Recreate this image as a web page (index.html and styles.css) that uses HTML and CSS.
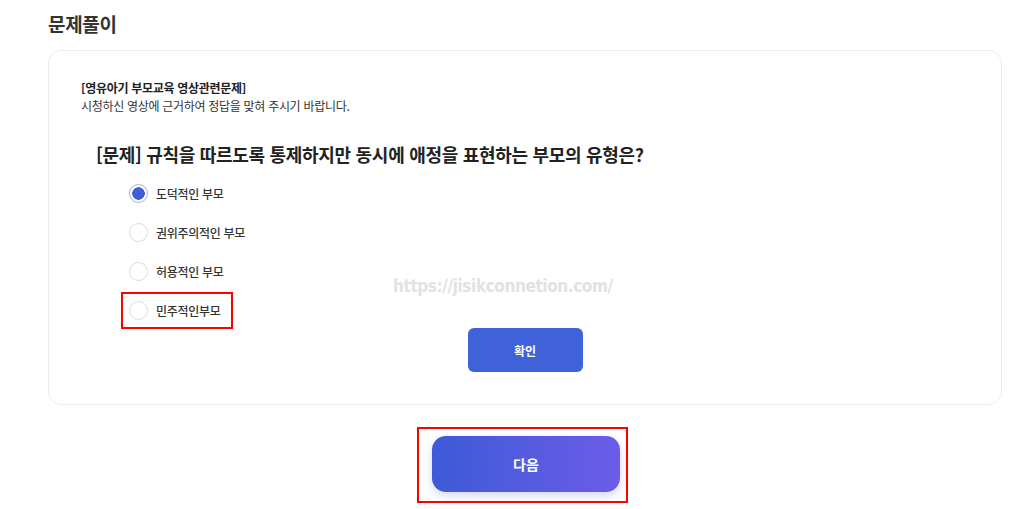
FILE: index.html
```html
<!DOCTYPE html>
<html lang="ko">
  <head>
    <meta charset="UTF-8" />
    <meta name="viewport" content="width=device-width, initial-scale=1.0" />
    <title>문제풀이</title>
    <link rel="stylesheet" href="styles.css">
  </head>
  <body>
    <div class="page">
      <h2 class="page-title">문제풀이</h2>

      <div class="quiz-card">
        <p class="quiz-label">[영유아기 부모교육 영상관련문제]</p>
        <p class="quiz-desc">시청하신 영상에 근거하여 정답을 맞혀 주시기 바랍니다.</p>

        <h3 class="quiz-question">[문제] 규칙을 따르도록 통제하지만 동시에 애정을 표현하는 부모의 유형은?</h3>

        <ul class="option-list">
          <li>
            <label class="option">
              <input type="radio" name="answer" checked />
              <span class="radio"></span>
              <span class="option-text">도덕적인 부모</span>
            </label>
          </li>
          <li>
            <label class="option">
              <input type="radio" name="answer" />
              <span class="radio"></span>
              <span class="option-text">권위주의적인 부모</span>
            </label>
          </li>
          <li>
            <label class="option">
              <input type="radio" name="answer" />
              <span class="radio"></span>
              <span class="option-text">허용적인 부모</span>
            </label>
          </li>
          <li>
            <label class="option option-marked">
              <input type="radio" name="answer" />
              <span class="radio"></span>
              <span class="option-text">민주적인부모</span>
            </label>
          </li>
        </ul>

        <div class="confirm-row">
          <button type="button" class="btn-confirm">확인</button>
        </div>

        <span class="watermark">https://jisikconnetion.com/</span>
      </div>

      <div class="next-row">
        <div class="next-mark">
          <button type="button" class="btn-next">다음</button>
        </div>
      </div>
    </div>
  </body>
</html>
```

FILE: styles.css
```css
body {
  margin: 0;
  background: #ffffff;
  font-family: "Noto Sans CJK KR", "Noto Sans", sans-serif;
  color: #222;
}
.page {
  padding: 11px 22px 0 48px;
}
.page-title {
  margin: 0;
  font-size: 19px;
  line-height: 26px;
  font-weight: 700;
  color: #333;
  letter-spacing: -0.3px;
}
.quiz-card {
  position: relative;
  margin-top: 13px;
  border: 1px solid #ececec;
  border-radius: 13px;
  padding: 28px 32px 32px 32px;
}
.quiz-label {
  margin: 0;
  font-size: 12px;
  line-height: 18px;
  font-weight: 700;
  color: #222;
  letter-spacing: -0.3px;
}
.quiz-desc {
  margin: 0;
  font-size: 12px;
  line-height: 18px;
  color: #333;
  letter-spacing: -0.3px;
}
.quiz-question {
  margin: 26px 0 0 15px;
  font-size: 18px;
  line-height: 26px;
  font-weight: 700;
  color: #222;
  letter-spacing: -0.3px;
}
.option-list {
  list-style: none;
  margin: 8px 0 0 40px;
  padding: 0;
}
.option-list li {
  margin-bottom: 2px;
}
.option {
  display: inline-flex;
  align-items: center;
  gap: 8px;
  padding: 7px 11px 7px 6px;
  border: 2px solid transparent;
  cursor: pointer;
}
.option input {
  display: none;
}
.radio {
  box-sizing: border-box;
  width: 19px;
  height: 19px;
  border-radius: 50%;
  border: 1px solid #dcdcdc;
  background: #fff;
}
.option input:checked + .radio {
  border: 1px solid #9fb0f0;
  background: radial-gradient(circle, #3d5fd9 0 6px, #fff 6.5px);
}
.option-text {
  font-size: 12px;
  line-height: 18px;
  font-weight: 500;
  color: #333;
  letter-spacing: -0.3px;
}
.option-marked {
  border-color: #ff0000;
}
.confirm-row {
  display: flex;
  justify-content: center;
  margin-top: -3px;
}
.btn-confirm {
  width: 115px;
  height: 44px;
  border: none;
  border-radius: 6px;
  background: #3f62d8;
  color: #fff;
  font-family: inherit;
  font-size: 12px;
  font-weight: 700;
  cursor: pointer;
}
.watermark {
  position: absolute;
  left: 344px;
  top: 225px;
  font-family: "DejaVu Sans", sans-serif;
  font-stretch: condensed;
  font-size: 17px;
  font-weight: 700;
  color: #e2e2e2;
  letter-spacing: -0.4px;
  pointer-events: none;
}
.next-row {
  display: flex;
  justify-content: center;
  margin-top: 22px;
}
.next-mark {
  margin-right: 5px;
  border: 2px solid #ff0000;
  padding: 7px 6px 9px 13px;
}
.btn-next {
  width: 188px;
  height: 56px;
  border: none;
  border-radius: 14px;
  background: linear-gradient(90deg, #3d5ad6, #6c5ce8);
  box-shadow: 0 4px 10px rgba(90, 100, 220, 0.25);
  color: #fff;
  font-family: inherit;
  font-size: 14px;
  font-weight: 700;
  cursor: pointer;
}
```
